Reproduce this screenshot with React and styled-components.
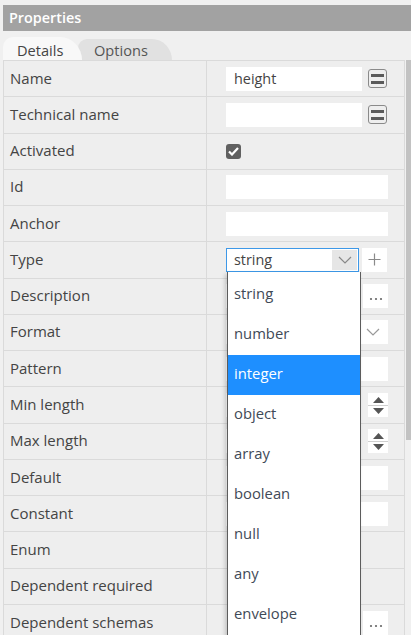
import React from 'react'
import styled, { createGlobalStyle } from 'styled-components'

const GlobalStyle = createGlobalStyle`
  html, body { margin: 0; padding: 0; background: #f0f0f0; }
  body {
    font-family: "Open Sans", "Noto Sans", sans-serif;
    font-size: 14px;
    color: #444;
  }
`

const PanelS = styled.div`
  width: 411px;
  height: 635px;
  overflow: hidden;
  padding: 5px 0 0 3px;
  box-sizing: border-box;
`

const HeaderS = styled.div`
  height: 26px;
  line-height: 26px;
  background: #a2a2a2;
  color: #fff;
  font-weight: 600;
  font-size: 14.4px;
  padding-left: 6px;
`

const TabBarS = styled.div`
  height: 29px;
  display: flex;
  align-items: flex-end;
`

const TabS = styled.div`
  position: relative;
  height: ${p => p.active ? 23 : 21}px;
  line-height: ${p => p.active ? 27 : 22}px;
  box-sizing: border-box;
  padding-left: ${p => p.active ? 14 : 16}px;
  width: ${p => p.active ? 79 : 94}px;
  margin-left: ${p => p.active ? 0 : -4}px;
  z-index: ${p => p.active ? 2 : 1};
  font-size: 14.6px;
  background: ${p => p.active ? '#f8f8f8' : '#e1e1e1'};
  color: ${p => p.active ? '#444' : '#555'};
  border-radius: 10px 22px 0 0 / 10px 23px 0 0;
`

const BodyS = styled.div`
  display: flex;
  align-items: flex-start;
`

const TableS = styled.div`
  flex: 1;
  border-top: 1px solid #dadada;
  border-left: 1px solid #dadada;
  border-right: 1px solid #dadada;
`

const ScrollS = styled.div`
  width: 5px;
  margin-left: 1px;
  height: 380px;
  background: #c2c2c2;
`

const RowS = styled.div`
  display: grid;
  grid-template-columns: 203px 1fr;
  height: 36.27px;
  box-sizing: border-box;
  border-bottom: 1px solid #dadada;
  background: #eeeeee;
`

const LabelS = styled.div`
  display: flex;
  align-items: center;
  padding: 0 0 2px 6px;
  border-right: 1px solid #dadada;
  white-space: nowrap;
  font-size: 15px;
`

const ValueS = styled.div`
  display: flex;
  align-items: center;
  gap: ${p => p.gap ?? 3}px;
  padding: 0 16px 0 19px;
  position: relative;
`

const InputS = styled.div`
  flex: ${p => p.width ? 'none' : 1};
  width: ${p => p.width ? p.width + 'px' : 'auto'};
  height: 24px;
  line-height: 23px;
  background: #fff;
  padding-left: 8px;
  box-sizing: border-box;
  color: #444;
  font-size: 14.4px;
`

const IconBtnS = styled.div`
  width: 19px;
  height: 19px;
  box-sizing: border-box;
  border: 1px solid #8a8a8a;
  border-radius: 3px;
  display: flex;
  flex-direction: column;
  justify-content: center;
  align-items: center;
  gap: 4px;
  > span {
    width: 13px;
    height: 3px;
    background: #5a5a5a;
  }
`

const CheckS = styled.div`
  width: 15px;
  height: 15px;
  border-radius: 3px;
  background: #606060;
  display: flex;
  align-items: center;
  justify-content: center;
`

const SideBtnS = styled.div`
  width: ${p => p.w ?? 25}px;
  height: 24px;
  background: #fff;
  display: flex;
  align-items: center;
  justify-content: center;
  color: #777;
  flex: none;
`

const SelectS = styled.div`
  position: relative;
  width: 133px;
  height: 24px;
  box-sizing: border-box;
  border: 1px solid #3d98e8;
  background: #fff;
  display: flex;
  align-items: center;
  padding: 0 0 1px 7px;
  font-size: 14.4px;
  flex: none;
  > .x__arrow {
    margin-left: auto;
    width: 25px;
    height: 20px;
    margin: 1px 1px 0 auto;
    background: #e6e6e6;
    display: flex;
    align-items: center;
    justify-content: center;
  }
`

const ListS = styled.div`
  position: absolute;
  top: 23px;
  left: 0px;
  width: 132px;
  padding-top: 3px;
  background: #fff;
  border: 1px solid #5c5c5c;
  border-top: none;
  box-shadow: -2px 2px 4px rgba(0, 0, 0, 0.18);
  z-index: 10;
`

const ItemS = styled.div`
  height: 40px;
  line-height: 37px;
  padding-left: 6px;
  font-size: 14.8px;
  color: ${p => p.active ? '#fff' : '#3f4a57'};
  background: ${p => p.active ? '#1e8fff' : '#fff'};
`

const SelectFieldS = styled(InputS)`
  display: flex;
  align-items: center;
  justify-content: flex-end;
  padding-right: 8px;
`

const SpinS = styled.div`
  width: 20px;
  height: 24px;
  background: #fff;
  display: flex;
  flex-direction: column;
  align-items: center;
  justify-content: center;
  gap: 2px;
  > hr {
    width: 20px;
    margin: 0;
    border: none;
    border-top: 1px solid #cfcfcf;
  }
`

const Chevron = ({ color = '#777' }) => <svg width='14' height='8' viewBox='0 0 14 8'>
  <polyline points='1,1 7,7 13,1' fill='none' stroke={color} strokeWidth='1.2'/>
</svg>

const Plus = () => <svg width='13' height='13' viewBox='0 0 13 13'>
  <path d='M6.5 0.5v12M0.5 6.5h12' stroke='#8a8a8a' strokeWidth='1.2'/>
</svg>

const Dots = () => <svg width='14' height='12' viewBox='0 0 14 12'>
  <circle cx='2' cy='9' r='1.1' fill='#666'/>
  <circle cx='7' cy='9' r='1.1' fill='#666'/>
  <circle cx='12' cy='9' r='1.1' fill='#666'/>
</svg>

const Tri = ({ down }) => <svg width='11' height='6' viewBox='0 0 11 6'>
  <polygon points={down ? '0,0 11,0 5.5,6' : '5.5,0 11,6 0,6'} fill='#555'/>
</svg>

const Spinner = () => <SpinS><Tri/><hr/><Tri down/></SpinS>

const types = ['string', 'number', 'integer', 'object', 'array', 'boolean', 'null', 'any', 'envelope']

const Row = ({ label, children, gap }) => <RowS>
  <LabelS>{label}</LabelS>
  <ValueS gap={gap}>{children}</ValueS>
</RowS>

export default function App () {
  return <PanelS>
    <GlobalStyle/>
    <HeaderS>Properties</HeaderS>
    <TabBarS>
      <TabS active>Details</TabS>
      <TabS>Options</TabS>
    </TabBarS>
    <BodyS>
      <TableS>
        <Row label='Name' gap={6}>
          <InputS width={136}>height</InputS>
          <IconBtnS><span/><span/></IconBtnS>
        </Row>
        <Row label='Technical name' gap={6}>
          <InputS width={136}/>
          <IconBtnS><span/><span/></IconBtnS>
        </Row>
        <Row label='Activated'>
          <CheckS>
            <svg width='11' height='9' viewBox='0 0 11 9'>
              <polyline points='1,4.5 4,7.5 10,1' fill='none' stroke='#fff' strokeWidth='2.2'/>
            </svg>
          </CheckS>
        </Row>
        <Row label='Id'><InputS/></Row>
        <Row label='Anchor'><InputS/></Row>
        <Row label='Type'>
          <SelectS>
            string
            <div className='x__arrow'><Chevron color='#888'/></div>
            <ListS>
              {types.map (t => <ItemS key={t} active={t === 'integer'}>{t}</ItemS>)}
            </ListS>
          </SelectS>
          <SideBtnS><Plus/></SideBtnS>
        </Row>
        <Row label='Description'>
          <InputS/>
          <SideBtnS><Dots/></SideBtnS>
        </Row>
        <Row label='Format'>
          <SelectFieldS><Chevron color='#999'/></SelectFieldS>
        </Row>
        <Row label='Pattern'><InputS/></Row>
        <Row label='Min length' gap={8}>
          <InputS/>
          <Spinner/>
        </Row>
        <Row label='Max length' gap={8}>
          <InputS/>
          <Spinner/>
        </Row>
        <Row label='Default'><InputS/></Row>
        <Row label='Constant'><InputS/></Row>
        <Row label='Enum'/>
        <Row label='Dependent required'/>
        <Row label='Dependent schemas'>
          <InputS style={{ visibility: 'hidden' }}/>
          <SideBtnS><Dots/></SideBtnS>
        </Row>
      </TableS>
      <ScrollS/>
    </BodyS>
  </PanelS>
}
